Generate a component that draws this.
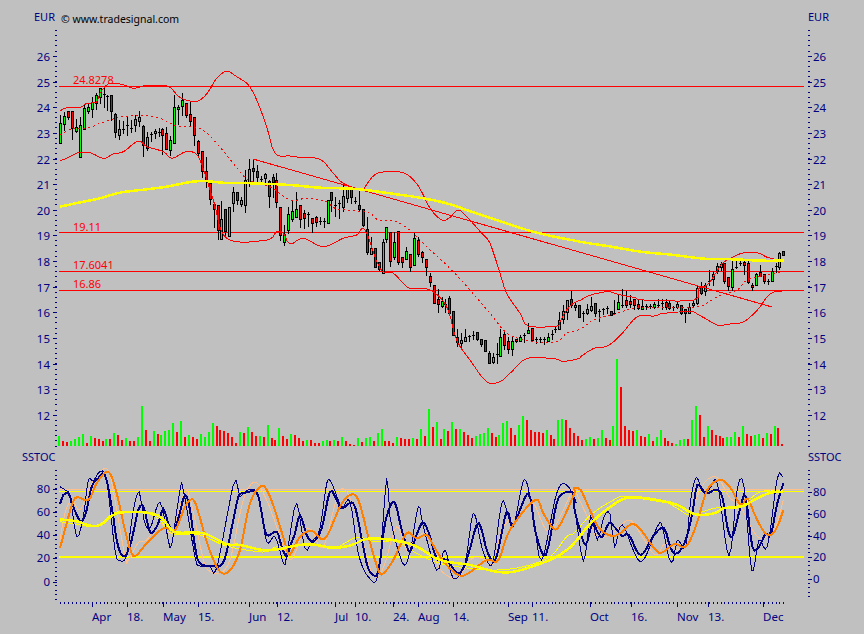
// price chart traced by hand: every series is kept as [x,y] points measured off the picture
type Origin = [number, number]

const LEFT: Origin = [0, 0]
const MID: Origin = [290, 140]
const RIGHT: Origin = [574, 220]
const LOW_LEFT: Origin = [0, 400]
const LOW_MID: Origin = [290, 400]
const LOW_RIGHT: Origin = [574, 400]

// points were read at 3x from the crop at the given origin, curves get catmull-rom between them
function trace(...parts: [Origin, string][]) {
  const pts: [number, number][] = []
  parts.forEach(([[ox, oy], raw]) => {
    raw
      .trim()
      .split(/\s+/)
      .forEach((p) => {
        const [x, y] = p.split(',').map(Number)
        pts.push([ox + x / 3, oy + y / 3])
      })
  })
  const out: string[] = []
  for (let i = 0; i < pts.length - 1; i++) {
    const p0 = pts[Math.max(i - 1, 0)]
    const p1 = pts[i]
    const p2 = pts[i + 1]
    const p3 = pts[Math.min(i + 2, pts.length - 1)]
    const steps = Math.max(1, Math.round((p2[0] - p1[0]) / 2))
    for (let s = 0; s < steps; s++) {
      const t = s / steps
      const f = (a: number, b: number, c: number, d: number) =>
        0.5 * (2 * b + (c - a) * t + (2 * a - 5 * b + 4 * c - d) * t * t + (3 * b - a - 3 * c + d) * t * t * t)
      out.push(`${f(p0[0], p1[0], p2[0], p3[0]).toFixed(1)},${f(p0[1], p1[1], p2[1], p3[1]).toFixed(1)}`)
    }
  }
  const last = pts[pts.length - 1]
  out.push(`${last[0].toFixed(1)},${last[1].toFixed(1)}`)
  return out.join(' ')
}

const barX = (i: number) => Math.round(60.3 + 3.93 * i)

// top wick, body top, body bottom, bottom wick, colour
const candleRows: [number, string][] = [
  [0, `345 370 428 428 g|335 348 372 390 g|334 334 350 358 r|334 334 384 416 r|358 382 392 396 g|350 376 470 470 g|312 324 386 386 g|310 322 332 338 g|290 306 326 352 g|280 286 308 326 g|265 265 292 310 g|265 282 282 320 k|286 287 287 330 k|286 286 332 360 r|340 342 396 410 r|360 388 404 416 g|362 386 386 400 k|350 374 374 405 k|360 383 383 395 k|345 358 374 392 g|334 352 362 378 g|374 378 436 468 r|395 412 444 450 g|395 402 402 422 k|388 394 400 415 g|385 396 396 408 k|385 386 404 462 r|380 400 446 448 r|408 420 450 466 g|286 322 428 428 g|316 320 326 372 g|278 300 318 345 g|310 310 344 352 r|306 342 362 378 r|352 352 404 434 r|420 424 458 468 r|454 454 514 530 r|472 514 540 560 r|548 548 596 612 r|606 612 628 680 r|616 616 690 716 r|604 658 716 718 g|628 628 692 705 r|622 622 708 708 g|560 576 608 632 g|576 576 600 612 r|590 600 612 618 g|510 541 614 636 g|478 508 550 558 g|476 504 512 545 r|494 514 530 545 r|528 536 536 545 k|518 522 534 545 g|540 542 588 620 r|522 532 545 592 r|520 540 606 620 r|620 620 706 720 r|676 703 725 735 g|620 642 690 700 g`],
  [140, `180 214 236 244 g|155 208 230 230 g|196 196 236 262 r|210 220 234 265 r|216 222 222 258 k|235 235 250 276 r|228 232 245 258 r|230 242 242 252 k|234 243 243 262 k|180 180 250 250 g|156 156 180 214 r|170 195 195 228 k|180 190 190 234 k|130 168 200 212 g|148 148 175 185 g|148 148 172 188 r|172 184 184 190 k|150 196 206 210 r|208 208 256 258 r|232 268 335 342 r|290 325 341 342 g|325 325 380 382 r|366 366 388 390 r|296 306 398 398 g|262 262 298 305 g|276 276 362 378 r|276 306 350 358 g|274 274 365 372 r|350 352 366 382 r|322 334 356 358 g|342 342 382 392 r|280 294 374 376 g|290 300 342 348 r|332 336 352 365 r|358 358 380 405 r|400 408 426 438 r|434 434 488 490 r|448 478 492 516 r|472 484 498 500 g|476 492 492 516 k|468 474 518 518 r|514 514 586 586 r|568 590 606 618 r|578 600 608 628 g|566 590 602 604 g|584 588 588 602 k|574 586 586 598 k|576 576 596 600 r|598 598 612 618 r|601 601 632 634 r|634 640 668 670 r|638 652 666 670 g|610 643 643 668 k|568 592 648 648 g|572 582 614 626 r|590 602 626 640 r|590 604 628 646 g|596 598 604 606 r|586 592 604 604 g|578 586 586 606 k|548 570 578 580 g|564 564 600 602 r|590 597 597 610 k|590 597 597 606 k|590 598 598 612 k|578 592 602 604 g|570 582 582 598 k|560 568 568 576 k|516 540 566 566 g|496 514 536 548 g|480 480 516 536 g|454 478 494 500 r`],
  [220, `245 256 262 270 g|256 256 290 292 r|272 280 280 302 k|252 268 278 282 g|232 258 270 272 g|250 250 278 288 r|268 274 274 304 k|264 268 268 282 k|258 264 264 280 k|274 274 284 286 r|240 278 278 282 k|222 246 266 268 g|206 254 254 262 k|212 240 256 260 r|226 242 252 262 r|238 238 256 268 r|240 252 264 268 r|240 258 266 268 g|252 258 258 266 k|252 258 258 264 k|245 252 262 264 g|238 254 254 262 k|238 250 250 266 k|238 246 262 266 r|244 248 264 268 r|258 260 260 270 k|246 252 262 264 g|256 256 278 282 r|268 268 280 306 r|250 262 278 278 g|244 250 256 258 g|196 204 248 252 g|186 198 218 222 r|190 194 212 226 g|150 184 184 196 k|152 162 176 196 g|128 138 152 160 g|126 132 142 150 g|130 130 182 188 r|172 172 198 210 r|118 146 200 210 g|118 140 140 144 k|124 130 130 136 k|116 126 136 162 r|124 130 186 188 r|190 194 200 210 r|158 162 194 196 g|134 156 168 168 r|162 162 182 188 r|176 182 182 192 k|144 154 184 184 g|130 138 138 156 k|96 100 140 146 g|94 94 106 106 r`],
]

type Candle = { x: number; wt: number; bt: number; bb: number; wb: number; c: string }
const candles: Candle[] = []
candleRows.forEach(([oy, row]) => {
  row.split('|').forEach((entry) => {
    const [wt, bt, bb, wb, c] = entry.split(' ')
    const y = (v: string) => Math.round(oy + Number(v) / 3)
    candles.push({ x: barX(candles.length), wt: y(wt), bt: y(bt), bb: y(bb), wb: y(wb), c })
  })
})

// positive = green bar, negative = red bar, height in px
const volume = [
  10, -5, -4, 5, 7, 9, 12, -3, 10, -8, -7, -5, 7, -7, 13, -11, -6, 8, -5, -5, 9, 40, -16, -5, 15, -12, 11, 15, 16, 23, -14, 25, -9, 11, -9, -7, 12, 9, 14, 23, -20, -16, -15, -13, -9, -3, 14, -13, 19, -14, -10, 10, -9, 21, -8, -6, 18, -10, -7,
  12, -11, -8, -5, 6, -6, -3, -3, 5, 6, -5, 6, -5, 9, -5, -2, -1, 8, -4, 8, 9, -5, 13, 17, -5, -5, -3, 9, -8, -7, -7, 8, -7, 17, -10, 37, -19, 24, -7, 17, -15, 24, -17, 17, -14, -11, -8, 10, 12, 13, 18, -13, -9, 11, 23, 25, -18, -11, 21, 30, -26, -16, -14, -14, -13, 16, -11, -7, 26, 27, -26, -18, -13, -10,
  -6, 7, 9, -7, 8, 16, -8, -6, 20, 87, -59, -20, -16, -15, 16, -10, -9, 12, -5, 9, 16, -8, -5, -3, 2, 6, 7, -7, 26, 40, -31, -9, 20, -16, -11, -10, -8, 9, 9, 14, -9, 20, -12, -10, 11, 12, -8, 13, -12, 20, -18, -2,
]

const upperBand = trace(
  [LEFT, '180,333 200,323 240,322 260,310 290,306 300,280 320,255 335,250 370,254 400,265 430,258 450,257 490,257 510,262 540,292 575,304 600,300 625,275 650,235 680,214 710,230 745,255 770,300 800,380 825,460 870,468'],
  [MID, '30,52 90,58 130,100 160,130 215,150 225,140 262,100 335,97 375,125 400,165 420,205 455,240 480,232 505,210 535,235 575,280 600,310 630,400 650,460 690,520 715,558 800,558 810,545 830,510 850,490'],
  [RIGHT, '20,240 50,225 90,216 110,216 140,225 180,232 210,240 360,240 375,205 400,195 425,160 445,130 480,110 510,98 550,98 580,112 615,120 630,125']
)
const midBand = trace(
  [LEFT, '180,405 220,385 260,385 300,370 335,358 370,350 420,345 480,355 530,378 580,380 615,395 650,430 700,490 745,540 810,560 870,600'],
  [MID, '50,175 110,185 135,205 200,213 240,220 265,240 320,245 370,280 415,325 480,385 540,450 600,520 640,570 670,590 730,605 800,605 830,580 870,568'],
  [RIGHT, '60,300 130,280 200,262 360,262 400,248 440,225 490,210 520,180 575,165 625,155']
)
const lowerBand = trace(
  [LEFT, '180,482 200,475 235,458 270,458 310,475 340,462 370,455 415,423 440,440 490,455 515,475 550,458 575,455 600,480 640,600 680,715 800,720 830,695 850,700'],
  [MID, '0,312 40,295 100,320 160,295 200,285 225,270 270,385 310,400 340,430 360,445 420,450 470,500 500,600 540,660 590,725 630,725 660,700 710,656 790,656 820,664 870,655'],
  [RIGHT, '20,410 60,385 100,378 140,345 190,290 240,288 270,280 350,275 375,285 430,315 450,315 480,310 510,305 550,270 580,230 600,216 625,213']
)
const longAverage = trace(
  [LEFT, '180,620 250,605 300,595 360,578 440,568 500,560 560,548 610,543 680,549 760,550 870,555'],
  [MID, '90,143 200,147 300,160 400,175 470,190 550,217 650,250 740,278 870,305'],
  [RIGHT, '100,78 200,95 300,105 390,116 480,118 560,122 630,122']
)

const navyThick = trace(
  [LOW_LEFT, '180,313 190,285 205,280 215,305 230,345 245,365 260,330 275,260 295,235 315,225 335,320 350,420 365,465 380,462 395,420 415,330 430,320 445,380 455,400 475,370 490,327 505,370 520,395 535,355 555,285 570,330 585,440 600,490 640,498 655,500 675,475 700,360 715,290 730,280 770,278 785,340 800,405 830,395 845,440 860,470'],
  [LOW_MID, '0,440 15,400 30,345 50,405 70,425 95,385 120,275 140,300 155,325 190,310 210,390 230,490 245,520 265,515 285,370 312,305 335,390 355,450 365,445 395,370 415,395 440,475 470,480 505,520 530,480 560,375 575,390 590,450 610,485 625,450 650,335 670,375 715,280 735,390 760,465 775,440 800,310 820,280 850,280'],
  [LOW_RIGHT, '0,320 15,380 35,435 55,370 70,395 85,410 105,370 125,385 145,408 165,405 200,465 240,405 270,385 290,445 310,460 335,420 355,340 370,255 395,280 425,270 445,290 460,380 475,410 500,320 515,290 535,440 555,440 575,400 590,405 610,310 628,250']
)
const navyThin = trace(
  [LOW_LEFT, '180,260 195,270 210,290 230,410 250,350 265,240 280,243 300,215 320,240 345,450 360,482 380,465 400,330 418,275 432,360 450,385 480,307 505,420 515,435 540,270 550,270 585,470 600,498 630,498 650,505 700,255 715,270 720,290 745,270 775,285 800,425 825,410 850,490 855,495 870,405'],
  [LOW_MID, '20,310 45,445 65,425 90,385 110,250 125,250 155,320 180,305 205,460 235,530 265,520 290,235 300,350 338,490 360,455 385,320 400,380 440,510 465,450 490,535 525,490 550,340 575,440 595,490 610,480 635,310 650,330 670,380 703,238 730,345 755,480 800,280 830,255 860,310'],
  [LOW_RIGHT, '0,300 28,482 50,350 70,420 90,350 108,342 122,440 145,375 200,485 250,380 265,380 285,475 298,480 310,420 335,440 350,300 367,232 385,275 405,270 430,250 465,468 490,265 510,260 533,512 555,420 580,440 610,235 625,230']
)
const orangeThick = trace(
  [LOW_LEFT, '180,445 200,370 225,295 265,300 290,250 325,215 350,280 375,390 395,460 410,465 440,430 490,385 525,390 555,320 575,298 590,320 625,440 660,515 690,510 720,450 750,310 785,258 810,290 840,380 860,445'],
  [LOW_MID, '0,465 30,410 65,393 105,415 150,320 180,285 205,300 235,410 265,510 280,520 310,480 350,400 380,415 410,405 435,445 465,490 505,525 535,520 590,480 625,480 660,390 735,300 760,340 790,385 810,375 855,275'],
  [LOW_RIGHT, '0,265 20,270 50,335 75,385 115,408 145,395 175,372 205,395 255,458 300,432 335,440 365,380 400,270 440,240 470,265 500,315 520,295 545,350 570,395 590,405 610,380 628,330']
)
const peachThin = trace(
  [LOW_LEFT, '180,420 195,340 215,300 240,330 270,260 300,215 325,212 345,300 375,470 385,480 415,428 440,420 480,370 515,400 555,275 575,315 610,480 625,510 655,520 690,480 730,300 765,247 800,300 830,380 870,480'],
  [LOW_MID, '40,395 65,390 100,440 150,270 195,330 235,490 260,533 285,490 320,380 350,450 375,420 415,400 445,500 500,535 540,480 575,475 610,490 640,380 700,340 730,310 780,395 850,265'],
  [LOW_RIGHT, '0,265 45,360 70,410 115,400 165,360 205,410 245,465 275,430 325,445 355,330 390,250 430,232 465,290 500,320 530,380 560,415 600,390 628,300']
)
const yellowThick = trace(
  [LOW_LEFT, '180,358 235,365 265,376 300,375 340,345 370,337 430,337 480,350 515,390 540,398 610,400 680,432 720,435 790,450 840,447'],
  [LOW_MID, '0,440 60,433 130,443 185,435 235,416 320,422 380,440 450,480 540,495 620,515 680,513 780,480 830,450'],
  [LOW_RIGHT, '0,430 50,370 110,320 165,293 260,303 310,315 365,343 420,340 450,325 500,320 550,295 590,278 628,275']
)
const yellowThin = trace(
  [LOW_LEFT, '180,365 240,375 290,378 340,340 370,335 430,335 480,360 515,400 600,405 680,438 790,456 830,440'],
  [LOW_MID, '0,445 60,430 130,445 200,412 250,425 320,425 380,460 450,490 540,505 620,510 700,500 780,470 830,410'],
  [LOW_RIGHT, '0,400 50,345 110,305 155,288 260,300 310,325 350,345 420,325 500,315 550,280 590,270 628,275']
)

const priceTicks = Array.from({ length: 15 }, (_, i) => ({ label: 26 - i, y: Math.round(56 + i * 25.64) }))
const stochLeft = [
  { label: 80, y: 489 },
  { label: 60, y: 512 },
  { label: 40, y: 535 },
  { label: 20, y: 558 },
  { label: 0, y: 582 },
]
const stochRight = [
  { label: 80, y: 492 },
  { label: 60, y: 514 },
  { label: 40, y: 536 },
  { label: 20, y: 557 },
  { label: 0, y: 579 },
]

const dates = [
  ['Apr', 92], ['18.', 127], ['May', 163], ['15.', 198], ['Jun', 249], ['12.', 277],
  ['Jul', 335], ['10.', 355], ['24.', 393], ['Aug', 418], ['14.', 453], ['Sep', 508], ['11.', 532],
  ['Oct', 590], ['16.', 631], ['Nov', 677], ['13.', 708], ['Dec', 763],
] as const

const dotRange = (from: number, to: number, step: number) => {
  const out: number[] = []
  for (let v = from; v <= to; v += step) out.push(Math.round(v))
  return out
}

function CandleMark({ x, wt, bt, bb, wb, c }: Candle) {
  const fill = c === 'g' ? 'fill-[#00ff00]' : 'fill-[#ff0000]'
  return (
    <g>
      <rect x={x} y={wt} width={1} height={wb - wt + 1} className="fill-black" />
      <rect x={x - 1} y={bt} width={3} height={bb - bt + 1} className="fill-black" />
      {c !== 'k' && bb - bt > 1 && (
        <rect x={x} y={bt + 1} width={1} height={bb - bt - 1} className={fill} />
      )}
    </g>
  )
}

export default function App() {
  return (
    <div className="h-[634px] w-[864px] overflow-hidden bg-[#c0c0c0] [font-family:'Noto_Sans',sans-serif]">
      <svg width={864} height={634} shapeRendering="crispEdges" className="block">
        {/* header labels */}
        <g className="fill-[#000080] text-[11px]">
          <text x={34} y={21}>EUR</text>
          <text x={808} y={21}>EUR</text>
          <text x={22} y={461}>SSTOC</text>
          <text x={808} y={461}>SSTOC</text>
        </g>
        <text x={61} y={23} className="fill-black text-[10.5px]">© www.tradesignal.com</text>

        {/* left and right price axis */}
        <g className="fill-[#000080]">
          {dotRange(30, 446, 5.13).map((y) => (
            <g key={y}>
              <rect x={55} y={y} width={2} height={1} />
              <rect x={808} y={y} width={2} height={1} />
            </g>
          ))}
          {priceTicks.map((t) => (
            <g key={t.label}>
              <rect x={53} y={t.y} width={4} height={1} />
              <rect x={808} y={t.y} width={4} height={1} />
            </g>
          ))}
          {dotRange(470, 600, 4.6).map((y) => (
            <rect key={y} x={55} y={y} width={2} height={1} />
          ))}
          {dotRange(470, 600, 4.34).map((y) => (
            <rect key={y} x={808} y={y} width={2} height={1} />
          ))}
          {stochLeft.map((t) => (
            <rect key={t.label} x={53} y={t.y} width={4} height={1} />
          ))}
          {stochRight.map((t) => (
            <rect key={t.label} x={808} y={t.y} width={4} height={1} />
          ))}
        </g>
        <g className="fill-[#000080] text-[11.5px]">
          {priceTicks.map((t) => (
            <g key={t.label}>
              <text x={50} y={t.y + 5} textAnchor="end">{t.label}</text>
              <text x={813} y={t.y + 5}>{t.label}</text>
            </g>
          ))}
          {stochLeft.map((t) => (
            <text key={t.label} x={50} y={t.y + 4} textAnchor="end">{t.label}</text>
          ))}
          {stochRight.map((t) => (
            <text key={t.label} x={813} y={t.y + 4}>{t.label}</text>
          ))}
        </g>

        {/* date axis */}
        <g className="fill-[#000080]">
          {candles.map((c) => (
            <rect key={c.x} x={c.x} y={602} width={1} height={2} />
          ))}
          {dates.map(([label, x]) => (
            <rect key={label + x} x={x} y={602} width={1} height={5} />
          ))}
        </g>
        <g className="fill-[#000080] text-[11.5px]">
          {dates.map(([label, x]) => (
            <text key={label + x} x={x} y={621}>{label}</text>
          ))}
        </g>

        {/* levels */}
        <g className="fill-[#ff0000]">
          <rect x={59} y={86} width={745} height={1} />
          <rect x={59} y={232} width={745} height={1} />
          <rect x={59} y={271} width={745} height={1} />
          <rect x={59} y={290} width={745} height={1} />
        </g>
        <g className="fill-[#ff0000] text-[11px]">
          <text x={73} y={84}>24.8278</text>
          <text x={73} y={231}>19.11</text>
          <text x={73} y={269}>17.6041</text>
          <text x={73} y={288}>16.86</text>
        </g>

        {/* volume */}
        {volume.map((v, i) => (
          <rect
            key={i}
            x={barX(i) - 2}
            y={446 - Math.abs(v)}
            width={2}
            height={Math.abs(v)}
            className={v > 0 ? 'fill-[#00ff00]' : 'fill-[#ff0000]'}
          />
        ))}

        {candles.map((c) => (
          <CandleMark key={c.x} {...c} />
        ))}

        {/* bands, trend line, average */}
        <g className="fill-none stroke-[#ff0000]">
          <polyline points={upperBand} />
          <polyline points={lowerBand} />
          <polyline points={midBand} strokeDasharray="2 3" />
          <line x1={253} y1={159} x2={772} y2={307} />
        </g>
        <polyline points={longAverage} strokeWidth={2.5} className="fill-none stroke-[#ffff00]" />

        {/* stochastic panel */}
        <rect x={59} y={489} width={745} height={1} className="fill-[#ffc08c]" />
        <rect x={59} y={491} width={745} height={1} className="fill-[#ffff00]" />
        <rect x={59} y={556} width={745} height={2} className="fill-[#ffff00]" />
        <g className="fill-none">
          <polyline points={peachThin} className="stroke-[#ffc08c]" />
          <polyline points={yellowThin} className="stroke-[#ffff00]" />
          <polyline points={navyThin} className="stroke-[#000080]" />
          <polyline points={navyThick} strokeWidth={2} className="stroke-[#000080]" />
          <polyline points={orangeThick} strokeWidth={2} className="stroke-[#ff8000]" />
          <polyline points={yellowThick} strokeWidth={2.5} className="stroke-[#ffff00]" />
        </g>
      </svg>
    </div>
  )
}
